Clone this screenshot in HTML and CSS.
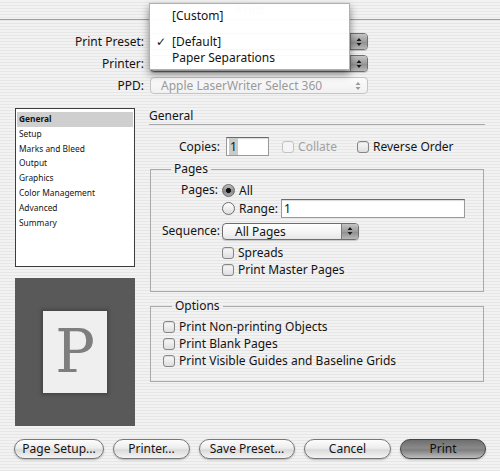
FILE: index.html
```html
<!DOCTYPE html>
<html>
<head>
<meta charset="utf-8">
<link rel="stylesheet" href="styles.css">
</head>
<body>
<div class="window">
  <div class="titlebar"><span class="title">Print</span></div>

  <div class="presets">
    <div class="plabel">Print Preset:</div>
    <div class="popup"><span class="ptext"></span><span class="parrow"><svg width="6" height="10" viewBox="0 0 6 10"><path d="M3 1 L5.5 4 H0.5Z M0.5 6 H5.5 L3 9Z" fill="#1a1a1a"/></svg></span></div>
    <div class="plabel">Printer:</div>
    <div class="popup"><span class="ptext"></span><span class="parrow"><svg width="6" height="10" viewBox="0 0 6 10"><path d="M3 1 L5.5 4 H0.5Z M0.5 6 H5.5 L3 9Z" fill="#1a1a1a"/></svg></span></div>
    <div class="plabel">PPD:</div>
    <div class="popup disabled"><span class="ptext">Apple LaserWriter Select 360</span><span class="parrow"><svg width="6" height="10" viewBox="0 0 6 10"><path d="M3 1 L5.5 4 H0.5Z M0.5 6 H5.5 L3 9Z" fill="#9a9a9a"/></svg></span></div>
  </div>

  <div class="main">
    <div class="leftcol">
      <ul class="list">
        <li class="sel">General</li>
        <li>Setup</li>
        <li>Marks and Bleed</li>
        <li>Output</li>
        <li>Graphics</li>
        <li>Color Management</li>
        <li>Advanced</li>
        <li>Summary</li>
      </ul>
      <div class="preview"><div class="page">P</div></div>
    </div>

    <div class="rightcol">
      <div class="section-title">General</div>

      <div class="copies">
        <span class="clabel">Copies:</span>
        <span class="field copiesfield"><span class="seltext">1</span></span>
        <span class="check dis"><span class="cb"></span>Collate</span>
        <span class="check rev"><span class="cb"></span>Reverse Order</span>
      </div>

      <fieldset class="group pages">
        <legend>Pages</legend>
        <div class="pgrid">
          <div class="glabel">Pages:</div>
          <div class="gval"><span class="rb on"></span>All</div>
          <div></div>
          <div class="gval"><span class="rb"></span>Range:<span class="field rangefield">1</span></div>
          <div class="glabel seq">Sequence:</div>
          <div class="gval seq"><div class="popup seqpop"><span class="ptext">All Pages</span><span class="parrow"><svg width="6" height="10" viewBox="0 0 6 10"><path d="M3 1 L5.5 4 H0.5Z M0.5 6 H5.5 L3 9Z" fill="#1a1a1a"/></svg></span></div></div>
          <div></div>
          <div class="gval chk first"><span class="cb"></span>Spreads</div>
          <div></div>
          <div class="gval chk"><span class="cb"></span>Print Master Pages</div>
        </div>
      </fieldset>

      <fieldset class="group options">
        <legend>Options</legend>
        <div class="orow"><span class="cb"></span>Print Non-printing Objects</div>
        <div class="orow"><span class="cb"></span>Print Blank Pages</div>
        <div class="orow"><span class="cb"></span>Print Visible Guides and Baseline Grids</div>
      </fieldset>
    </div>
  </div>

  <div class="buttons">
    <span class="btn w1">Page Setup...</span>
    <span class="btn w2">Printer...</span>
    <span class="btn w3">Save Preset...</span>
    <span class="btn w4">Cancel</span>
    <span class="btn w5 default">Print</span>
  </div>

  <div class="menu">
    <div class="mitem">[Custom]</div>
    <div class="msep"></div>
    <div class="mitem checked"><span class="tick">✓</span>[Default]</div>
    <div class="mitem">Paper Separations</div>
  </div>
</div>
</body>
</html>
```

FILE: styles.css
```css
* { box-sizing: border-box; }
html, body { margin: 0; padding: 0; }
body {
  font-family: "Noto Sans", "DejaVu Sans", sans-serif;
  font-size: 12px;
  color: #141414;
}
.window {
  position: relative;
  width: 500px;
  height: 471px;
  overflow: hidden;
  background: repeating-linear-gradient(to bottom, #f2f2f2 0, #f2f2f2 2px, #e6e6e6 2px, #e6e6e6 3px);
}
.titlebar {
  height: 20px;
  border-bottom: 1px solid #9c9c9c;
  text-align: center;
  line-height: 19px;
}
.title { color: #9a9a9a; font-size: 12px; }

/* presets */
.presets {
  display: grid;
  grid-template-columns: 144px 218px;
  grid-auto-rows: 17px;
  column-gap: 6px;
  row-gap: 5px;
  margin-top: 13px;
  align-items: center;
}
.plabel { text-align: right; line-height: 17px; }

.popup {
  display: flex;
  height: 17px;
  border: 1px solid #6e6e6e;
  border-radius: 4px;
  background: linear-gradient(#ffffff, #f3f3f3 60%, #e6e6e6);
  box-shadow: 0 1px 1px rgba(0,0,0,0.18);
  overflow: hidden;
}
.ptext {
  flex: 1;
  padding-left: 10px;
  line-height: 15px;
  white-space: nowrap;
  overflow: hidden;
}
.parrow {
  width: 17px;
  display: flex;
  align-items: center;
  justify-content: center;
  border-left: 1px solid #7a7a7a;
  background: linear-gradient(#c4c4c4, #9c9c9c 50%, #8c8c8c 51%, #b8b8b8);
}
.popup.disabled {
  border-color: #c4c4c4;
  box-shadow: none;
  background: linear-gradient(#fbfbfb, #f1f1f1);
}
.popup.disabled .ptext { color: #9a9a9a; }
.popup.disabled .parrow { background: transparent; border-left-color: transparent; width: 20px; }

/* main */
.main {
  display: flex;
  gap: 14px;
  padding-left: 15px;
  margin-top: 14px;
}
.leftcol { width: 120px; display: flex; flex-direction: column; }
.list {
  list-style: none;
  margin: 0;
  padding: 3px 1px 0 1px;
  height: 159px;
  border: 1px solid #3c3c3c;
  background: #fff;
  font-size: 8.4px;
}
.list li {
  height: 14.8px;
  line-height: 14.8px;
  padding-left: 2px;
}
.list li.sel { background: #cfcfcf; font-weight: bold; }

.preview {
  margin-top: 11px;
  height: 148px;
  background: #595959;
  display: flex;
  align-items: center;
  justify-content: center;
}
.page {
  width: 64px;
  height: 82px;
  background: #efefef;
  box-shadow: 0 0 3px 2px #474747;
  font-family: "DejaVu Serif", serif;
  font-size: 59px;
  line-height: 82px;
  text-align: center;
  color: #7e7e7e;
}

.rightcol { width: 336px; }
.section-title {
  height: 16px;
  line-height: 16px;
  border-bottom: 1px solid #a8a8a8;
  box-sizing: content-box;
}
.copies {
  display: flex;
  align-items: center;
  height: 19px;
  margin-top: 12px;
  padding-left: 30px;
}
.clabel { margin-right: 6px; }
.field {
  display: inline-block;
  height: 19px;
  background: #fff;
  border: 1px solid #9a9a9a;
  border-top-color: #6a6a6a;
  box-shadow: inset 0 1px 1px rgba(0,0,0,0.15);
  line-height: 17px;
  padding-left: 2px;
}
.copiesfield { width: 43px; }
.seltext { background: #cacaca; padding: 0 1px; }
.check { display: inline-flex; align-items: center; }
.check.dis { margin-left: 13px; color: #a2a2a2; }
.check.dis .cb { border-color: #c2c2c2; background: #f4f4f4; box-shadow: none; }
.check.rev { margin-left: 20px; }

.cb {
  display: inline-block;
  width: 12px;
  height: 12px;
  border: 1px solid #868686;
  border-radius: 3px;
  background: linear-gradient(#fafafa, #dedede);
  box-shadow: inset 0 1px 1px rgba(0,0,0,0.12);
  margin-right: 4px;
  flex: none;
}
.rb {
  display: inline-block;
  width: 13px;
  height: 13px;
  border: 1px solid #6c6c6c;
  border-radius: 50%;
  background: linear-gradient(#ffffff, #dddddd);
  margin-right: 4px;
  flex: none;
}
.rb.on {
  background: radial-gradient(circle, #111 0, #111 2.2px, transparent 2.8px), linear-gradient(#bdbdbd, #8a8a8a 55%, #a8a8a8);
}

.group {
  margin: 0;
  padding: 0;
  min-width: 0;
  width: 334px;
  margin-left: 1px;
  border: 1px solid #a9a9a9;
}
.group legend {
  padding: 0 3px;
  margin-left: 9px;
  line-height: 16px;
}
.pages { margin-top: 5px; padding: 4px 0 13px 11px; }
.pgrid {
  display: grid;
  grid-template-columns: 56px auto;
  column-gap: 4px;
  align-items: center;
}
.glabel { text-align: right; line-height: 18px; }
.gval { display: flex; align-items: center; height: 18px; }
.rangefield { width: 184px; margin-left: 3px; }
.glabel.seq, .gval.seq { margin-top: 5px; }
.seqpop { width: 137px; }
.seqpop .ptext { padding-left: 12px; }
.gval.chk { height: 17px; }
.gval.chk.first { margin-top: 4px; }

.options { margin-top: 6px; padding: 4px 0 12px 12px; }
.orow { display: flex; align-items: center; height: 17px; }

/* buttons */
.buttons {
  display: flex;
  gap: 9px;
  padding-left: 14px;
  margin-top: 13px;
}
.btn {
  height: 20px;
  border: 1px solid #767676;
  border-radius: 10px;
  background: linear-gradient(#fdfdfd, #ededed 45%, #dadada 55%, #f4f4f4);
  box-shadow: 0 1px 2px rgba(0,0,0,0.25);
  text-align: center;
  line-height: 18px;
}
.w1 { width: 90px; }
.w2 { width: 77px; }
.w3 { width: 96px; }
.w4 { width: 87px; }
.w5 { width: 86px; }
.btn.default {
  border-color: #444;
  color: #0e0e0e;
  background: linear-gradient(#6e6e6e, #8a8a8a 45%, #7e7e7e 55%, #bdbdbd);
}

/* popup menu */
.menu {
  position: absolute;
  left: 149px;
  top: 3px;
  width: 201px;
  height: 67px;
  background: rgba(255,255,255,0.96);
  border: 1px solid #b0b0b0;
  box-shadow: 0 4px 8px rgba(0,0,0,0.45);
  padding-top: 4px;
}
.mitem {
  position: relative;
  height: 16px;
  line-height: 16px;
  padding-left: 22px;
}
.msep { height: 10px; }
.tick { position: absolute; left: 6px; top: 0; font-family: "DejaVu Sans", sans-serif; font-size: 12px; }
```
